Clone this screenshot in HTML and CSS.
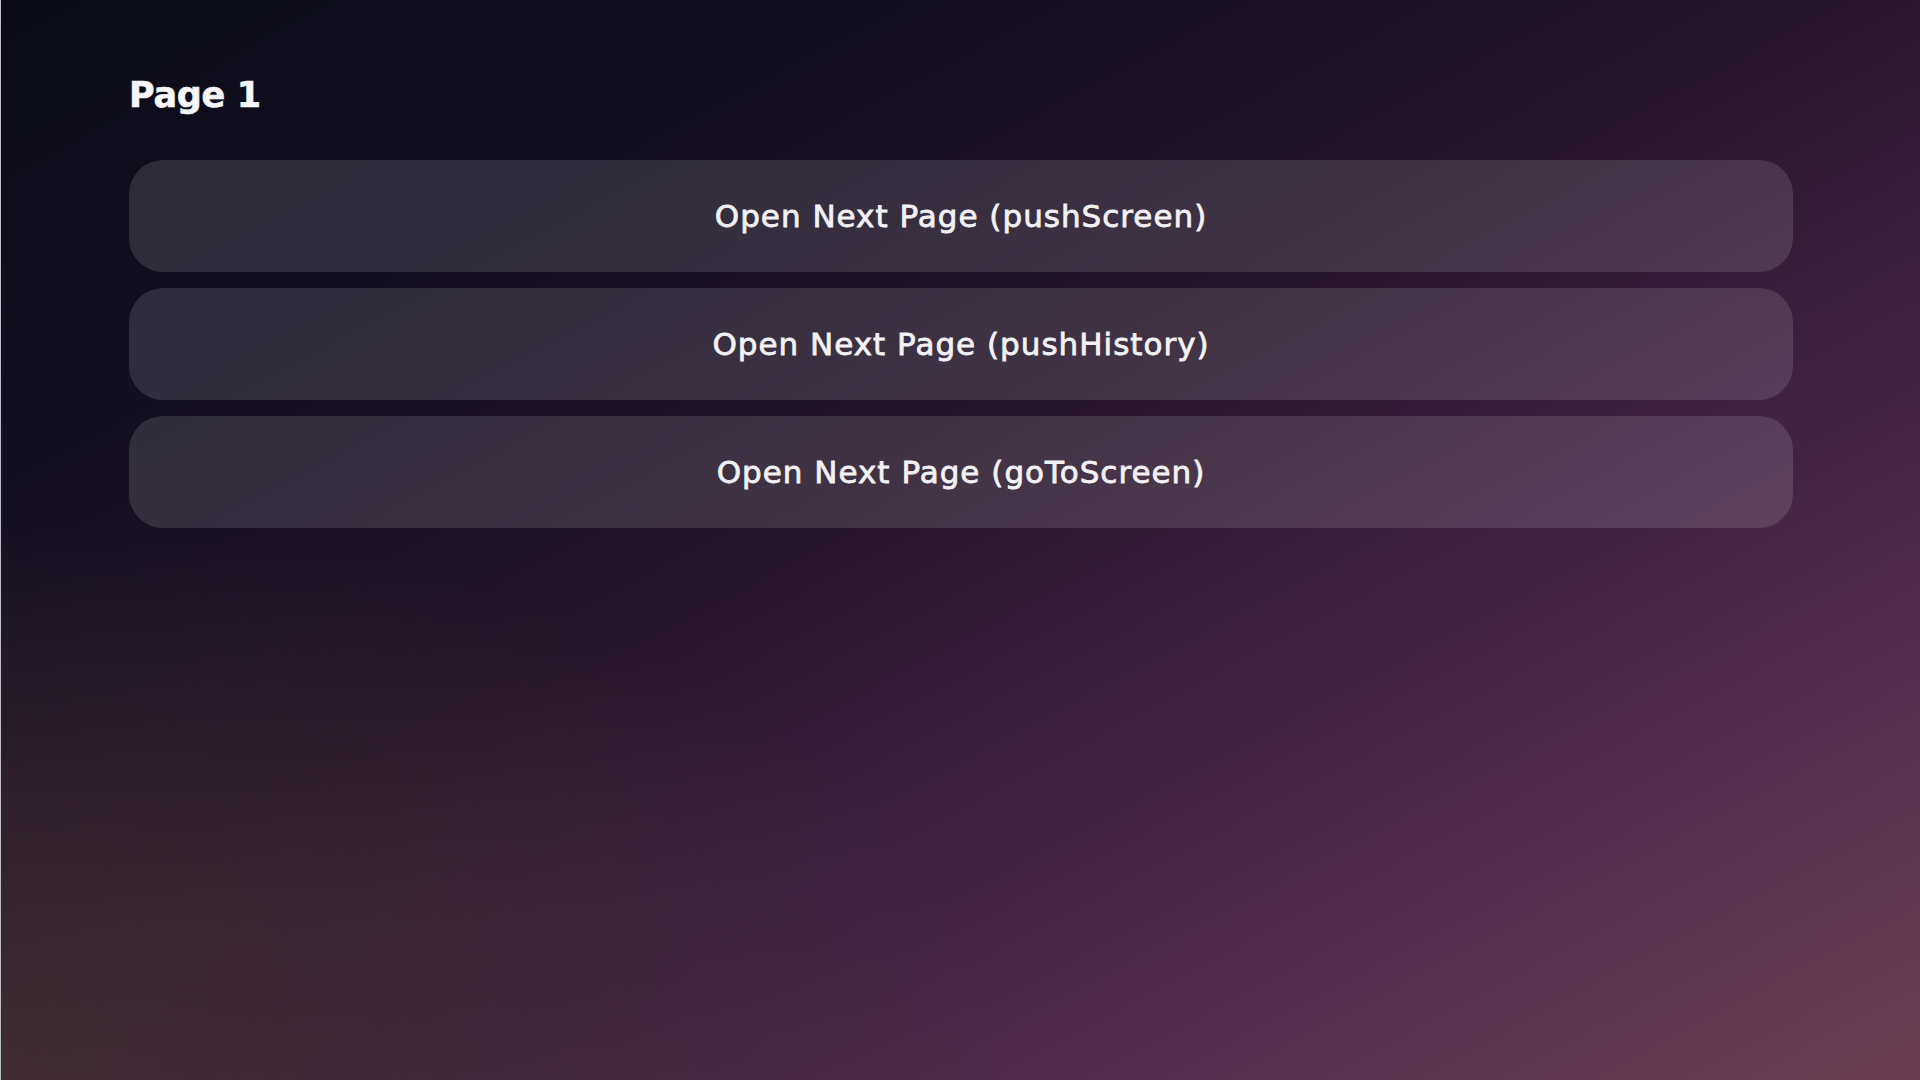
FILE: index.html
```html
<!DOCTYPE html>
<html lang="en">
<head>
<meta charset="utf-8">
<title>Page 1</title>
<link rel="stylesheet" href="styles.css">
</head>
<body>
<main class="screen">
  <h1 class="title">Page 1</h1>
  <div class="menu">
    <button class="menu-btn">Open Next Page (pushScreen)</button>
    <button class="menu-btn">Open Next Page (pushHistory)</button>
    <button class="menu-btn">Open Next Page (goToScreen)</button>
  </div>
</main>
</body>
</html>
```

FILE: styles.css
```css
html, body {
  margin: 0;
  padding: 0;
  width: 1920px;
  height: 1080px;
  overflow: hidden;
}

body {
  background-color: #0c0b18;
  background-image:
    radial-gradient(ellipse 1000px 560px at 0% 100%, rgba(72, 54, 52, 0.7), rgba(72, 54, 52, 0) 100%),
    linear-gradient(152deg, #0b0b17 0%, #120f20 22%, #251529 45%, #3e2240 64%, #56304e 82%, #6c3e51 100%);
  font-family: "DejaVu Sans", "Open Sans", sans-serif;
  color: #f4f3f6;
}

.screen {
  box-sizing: border-box;
  height: 1080px;
  border-left: 1px solid #bdbcc4;
  padding: 75px 127px 0 128px;
  display: flex;
  flex-direction: column;
}

.title {
  margin: 0 0 45px 0;
  font-family: "DejaVu Sans", "Open Sans", sans-serif;
  font-weight: 700;
  font-size: 35px;
  line-height: 40px;
  letter-spacing: -0.3px;
  -webkit-text-stroke: 0.6px #f6f5f8;
  color: #f6f5f8;
}

.menu {
  display: flex;
  flex-direction: column;
  gap: 16px;
}

.menu-btn {
  height: 112px;
  border: 0;
  border-radius: 34px;
  background: rgba(255, 255, 255, 0.125);
  color: #f2f1f4;
  font-family: "DejaVu Sans", "Open Sans", sans-serif;
  font-weight: 400;
  font-size: 31px;
  letter-spacing: 1px;
  -webkit-text-stroke: 0.8px #f2f1f4;
  padding: 0;
  cursor: pointer;
}
```
